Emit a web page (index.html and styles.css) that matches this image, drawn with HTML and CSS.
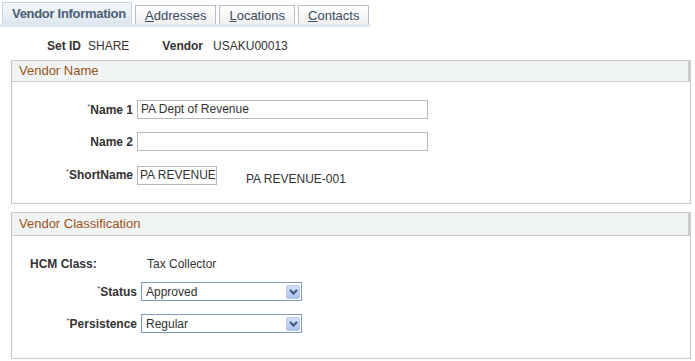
FILE: index.html
```html
<!DOCTYPE html>
<html lang="en">
<head>
<meta charset="UTF-8">
<title>Vendor Information</title>
<link rel="stylesheet" href="styles.css">
</head>
<body>
<div class="tabs">
    <div class="tab active">Vendor Information</div>
    <div class="tab"><u>A</u>ddresses</div>
    <div class="tab"><u>L</u>ocations</div>
    <div class="tab"><u>C</u>ontacts</div>
</div>

<div class="keys">
    <span class="key-label">Set ID</span>
    <span class="key-value">SHARE</span>
    <span class="key-label vendor">Vendor</span>
    <span class="key-value">USAKU00013</span>
</div>

<div class="section">
    <div class="section-title">Vendor Name</div>
    <div class="section-body name-body">
        <div class="row">
            <label class="label"><span class="req">*</span>Name 1</label>
            <div class="input wide">PA Dept of Revenue</div>
        </div>
        <div class="row">
            <label class="label">Name 2</label>
            <div class="input wide"></div>
        </div>
        <div class="row">
            <label class="label"><span class="req">*</span>ShortName</label>
            <div class="input short">PA REVENUE</div>
            <span class="short-code">PA REVENUE-001</span>
        </div>
    </div>
</div>

<div class="section">
    <div class="section-title tall">Vendor Classification</div>
    <div class="section-body class-body">
        <div class="hcm-row">
            <span class="hcm-label">HCM Class:</span>
            <span class="hcm-value">Tax Collector</span>
        </div>
        <div class="row class-row">
            <label class="label"><span class="req">*</span>Status</label>
            <div class="select">
                <span>Approved</span>
                <span class="arrow"><svg width="9" height="6" viewBox="0 0 9 6"><path d="M1 1 L4.5 4.5 L8 1" fill="none" stroke="#3f5670" stroke-width="2"/></svg></span>
            </div>
        </div>
        <div class="row class-row">
            <label class="label"><span class="req">*</span>Persistence</label>
            <div class="select">
                <span>Regular</span>
                <span class="arrow"><svg width="9" height="6" viewBox="0 0 9 6"><path d="M1 1 L4.5 4.5 L8 1" fill="none" stroke="#3f5670" stroke-width="2"/></svg></span>
            </div>
        </div>
    </div>
</div>
</body>
</html>
```

FILE: styles.css
```css
body {
    margin: 0;
    padding: 0;
    font-family: "Liberation Sans", Arial, sans-serif;
    font-size: 12px;
    color: #333;
    background-color: #fff;
    white-space: nowrap;
}

.tabs {
    display: flex;
    align-items: flex-end;
    gap: 3px;
    width: 368px;
    padding: 2px 0 0 2px;
    border-bottom: 3px solid #dde6ef;
}

.tab {
    flex-shrink: 0;
    height: 18px;
    line-height: 19px;
    padding: 0 9px;
    border: 1px solid #b2bfcc;
    border-bottom: none;
    background: linear-gradient(#ffffff, #f0f0f0);
    color: #3a4c60;
    font-size: 13px;
}

.tab.active {
    width: 110px;
    height: 21px;
    line-height: 21px;
    border-color: #c9d5e1;
    background: linear-gradient(#f6f9fc, #dde6ef);
    color: #4a5d73;
    font-weight: bold;
    letter-spacing: -0.3px;
}

.keys {
    display: flex;
    align-items: center;
    height: 16px;
    margin-top: 11px;
    padding-left: 47px;
}

.key-label {
    font-weight: bold;
    margin-right: 7px;
}

.key-label.vendor {
    margin-left: 33px;
    margin-right: 10px;
}

.section {
    width: 678px;
    margin-left: 11px;
    margin-top: 6px;
    border: 1px solid #c8ccd0;
    border-left-color: #bfc3c7;
}

.section + .section {
    margin-top: 8px;
}

.section-title {
    height: 20px;
    line-height: 20px;
    padding-left: 7px;
    background-color: #f1f4f5;
    border-bottom: 1px solid #c8ccd0;
    border-right: 2px solid #c8ccd0;
    color: #9c5216;
    font-size: 13px;
}

.section-title.tall {
    height: 22px;
    line-height: 22px;
}

.section-body {
    display: flex;
    flex-direction: column;
}

.name-body {
    padding: 18px 0 17px;
    gap: 13px;
}

.row {
    display: flex;
    align-items: center;
}

.label {
    width: 121px;
    margin-right: 4px;
    text-align: right;
    font-weight: bold;
    font-size: 12px;
}

.req {
    font-size: 8px;
    font-weight: normal;
    vertical-align: top;
    position: relative;
    top: -1px;
    color: #555;
}

.input {
    height: 17px;
    line-height: 17px;
    padding: 0 3px;
    border: 1px solid #b9b9b9;
    box-sizing: content-box;
    color: #333;
    overflow: hidden;
}

.input.wide {
    width: 283px;
}

.input.short {
    width: 74px;
    padding: 0 2px;
}

.short-code {
    margin-left: 29px;
    margin-top: 8px;
}

.class-body {
    padding: 20px 0 25px;
}

.hcm-row {
    display: flex;
    align-items: center;
    height: 16px;
    padding-left: 18px;
    margin-bottom: 10px;
}

.hcm-label {
    width: 117px;
    font-weight: bold;
}

.class-row + .class-row {
    margin-top: 13px;
}

.class-row .label {
    width: 125px;
}

.select {
    display: flex;
    align-items: center;
    justify-content: space-between;
    width: 155px;
    height: 17px;
    padding-left: 4px;
    border: 1px solid #7d9bb7;
    font-size: 12px;
}

.arrow {
    display: flex;
    align-items: center;
    justify-content: center;
    width: 14px;
    height: 14px;
    margin-right: 1px;
    border-radius: 2px;
    background: linear-gradient(#d3e1fb, #a9c2ef);
    border: 1px solid #b4c8ec;
    box-sizing: border-box;
}
```
